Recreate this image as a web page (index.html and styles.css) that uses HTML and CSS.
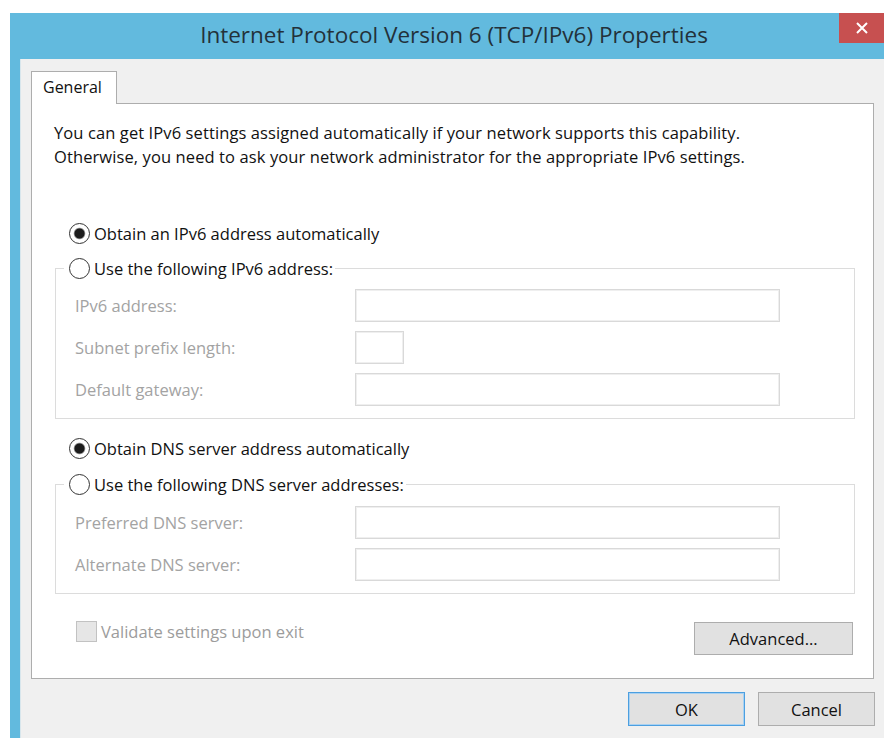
FILE: index.html
```html
<!DOCTYPE html>
<html lang="en">
<head>
<meta charset="utf-8">
<title>Internet Protocol Version 6 (TCP/IPv6) Properties</title>
<link rel="stylesheet" href="styles.css">
</head>
<body>
<div class="window">
  <div class="titlebar">
    <div class="title">Internet Protocol Version 6 (TCP/IPv6) Properties</div>
    <div class="close" aria-label="Close">
      <svg width="12" height="12" viewBox="0 0 12 12"><path d="M1 1 L11 11 M11 1 L1 11" stroke="#fff" stroke-width="2" fill="none"/></svg>
    </div>
  </div>
  <div class="client">
    <div class="tabs"><div class="tab">General</div></div>
    <div class="panel">
      <p class="intro">You can get IPv6 settings assigned automatically if your network supports this capability.<br>Otherwise, you need to ask your network administrator for the appropriate IPv6 settings.</p>

      <label class="radio addr-auto"><span class="dot checked"></span>Obtain an IPv6 address automatically</label>
      <fieldset class="group addr">
        <legend><label class="radio"><span class="dot"></span>Use the following IPv6 address:</label></legend>
        <div class="field"><span class="lbl">IPv6 address:</span><span class="box wide"></span></div>
        <div class="field"><span class="lbl">Subnet prefix length:</span><span class="box narrow"></span></div>
        <div class="field"><span class="lbl">Default gateway:</span><span class="box wide"></span></div>
      </fieldset>

      <label class="radio dns-auto"><span class="dot checked"></span>Obtain DNS server address automatically</label>
      <fieldset class="group dns">
        <legend><label class="radio"><span class="dot"></span>Use the following DNS server addresses:</label></legend>
        <div class="field"><span class="lbl">Preferred DNS server:</span><span class="box wide"></span></div>
        <div class="field"><span class="lbl">Alternate DNS server:</span><span class="box wide"></span></div>
      </fieldset>

      <div class="footer">
        <label class="check"><span class="checkbox"></span>Validate settings upon exit</label>
        <button class="btn advanced">Advanced...</button>
      </div>
    </div>
    <div class="actions">
      <button class="btn default">OK</button>
      <button class="btn">Cancel</button>
    </div>
  </div>
</div>
</body>
</html>
```
FILE: styles.css
```css
html, body {
  margin: 0;
  background: #ffffff;
  overflow: hidden;
}

body {
  font-family: "Open Sans", "Noto Sans", sans-serif;
  font-size: 16.5px;
  color: #111;
}

/* window frame */
.window {
  margin: 13px 0 0 10px;
  height: 725px;
  background: #62bade;
  display: flex;
  flex-direction: column;
}

.titlebar {
  height: 46px;
  display: flex;
  align-items: flex-start;
  flex: none;
}

.title {
  flex: 1;
  padding-left: 59px;
  text-align: center;
  font-size: 22.5px;
  line-height: 43px;
  color: #23313a;
}

.close {
  width: 45px;
  height: 30px;
  background: #c75050;
  display: flex;
  align-items: center;
  justify-content: center;
}

.client {
  flex: 1;
  margin-left: 10px;
  border-left: 1px solid #d8e6ec;
  background: #f0f0f0;
  padding: 12px 0 0 10px;
  display: flex;
  flex-direction: column;
}

/* tab strip */
.tabs {
  display: flex;
}

.tab {
  width: 86px;
  height: 33px;
  box-sizing: border-box;
  margin-bottom: -1px;
  border: 1px solid #adadad;
  border-bottom: none;
  background: #fff;
  padding-left: 11px;
  line-height: 31px;
  font-size: 16px;
  position: relative;
  z-index: 1;
}

.panel {
  width: 843px;
  height: 576px;
  box-sizing: border-box;
  border: 1px solid #adadad;
  background: #fff;
}

.intro {
  margin: 17px 0 0 22px;
  line-height: 24px;
  letter-spacing: 0.1px;
}

/* radio buttons */
.radio {
  display: flex;
  align-items: center;
  height: 24px;
  gap: 4px;
  white-space: nowrap;
}

.addr-auto {
  margin: 52px 0 0 37px;
}

.dns-auto {
  margin: 17px 0 0 37px;
}

.dot {
  width: 21px;
  height: 21px;
  box-sizing: border-box;
  border: 1px solid #333;
  border-radius: 50%;
  background: #fff;
  flex: none;
}

.dot.checked {
  background: radial-gradient(circle, #1c1c1c 0 4.6px, #8a8a8a 5.3px, #fff 6.2px);
}

/* group boxes */
.group {
  width: 800px;
  box-sizing: border-box;
  margin: 11px 0 0 23px;
  border: 1px solid #dcdcdc;
  padding: 9px 0 12px 8px;
  min-width: 0;
}

.group.dns {
  margin-top: 12px;
  padding-top: 10px;
}

.group legend {
  padding: 0 2px 0 5px;
}

.field {
  display: flex;
  align-items: center;
  margin-left: 11px;
  color: #a3a3a3;
}

.field + .field {
  margin-top: 9px;
}

.lbl {
  width: 280px;
}

.box {
  height: 33px;
  box-sizing: border-box;
  border: 1px solid #d9d9d9;
  box-shadow: inset 0 0 0 1px #efefef;
  background: #fff;
}

.box.wide {
  width: 425px;
}

.box.narrow {
  width: 49px;
}

/* bottom of the page */
.footer {
  display: flex;
  justify-content: space-between;
  align-items: flex-start;
  margin: 25px 20px 0 44px;
}

.check {
  display: flex;
  align-items: center;
  gap: 4px;
  height: 24px;
  color: #9c9c9c;
}

.checkbox {
  width: 21px;
  height: 21px;
  box-sizing: border-box;
  border: 1px solid #c2c2c2;
  background: #e6e6e6;
}

.btn {
  font: inherit;
  color: #111;
  background: #e1e1e1;
  border: 1px solid #adadad;
  padding: 0;
  height: 34px;
  width: 117px;
}

.btn.advanced {
  width: 159px;
  height: 33px;
  margin-top: 3px;
}

.btn.default {
  border-color: #4c9fe0;
  box-shadow: inset 0 0 0 1px #a9d1f1;
}

.actions {
  display: flex;
  justify-content: flex-end;
  gap: 13px;
  margin-top: 13px;
  padding-right: 9px;
}
```
